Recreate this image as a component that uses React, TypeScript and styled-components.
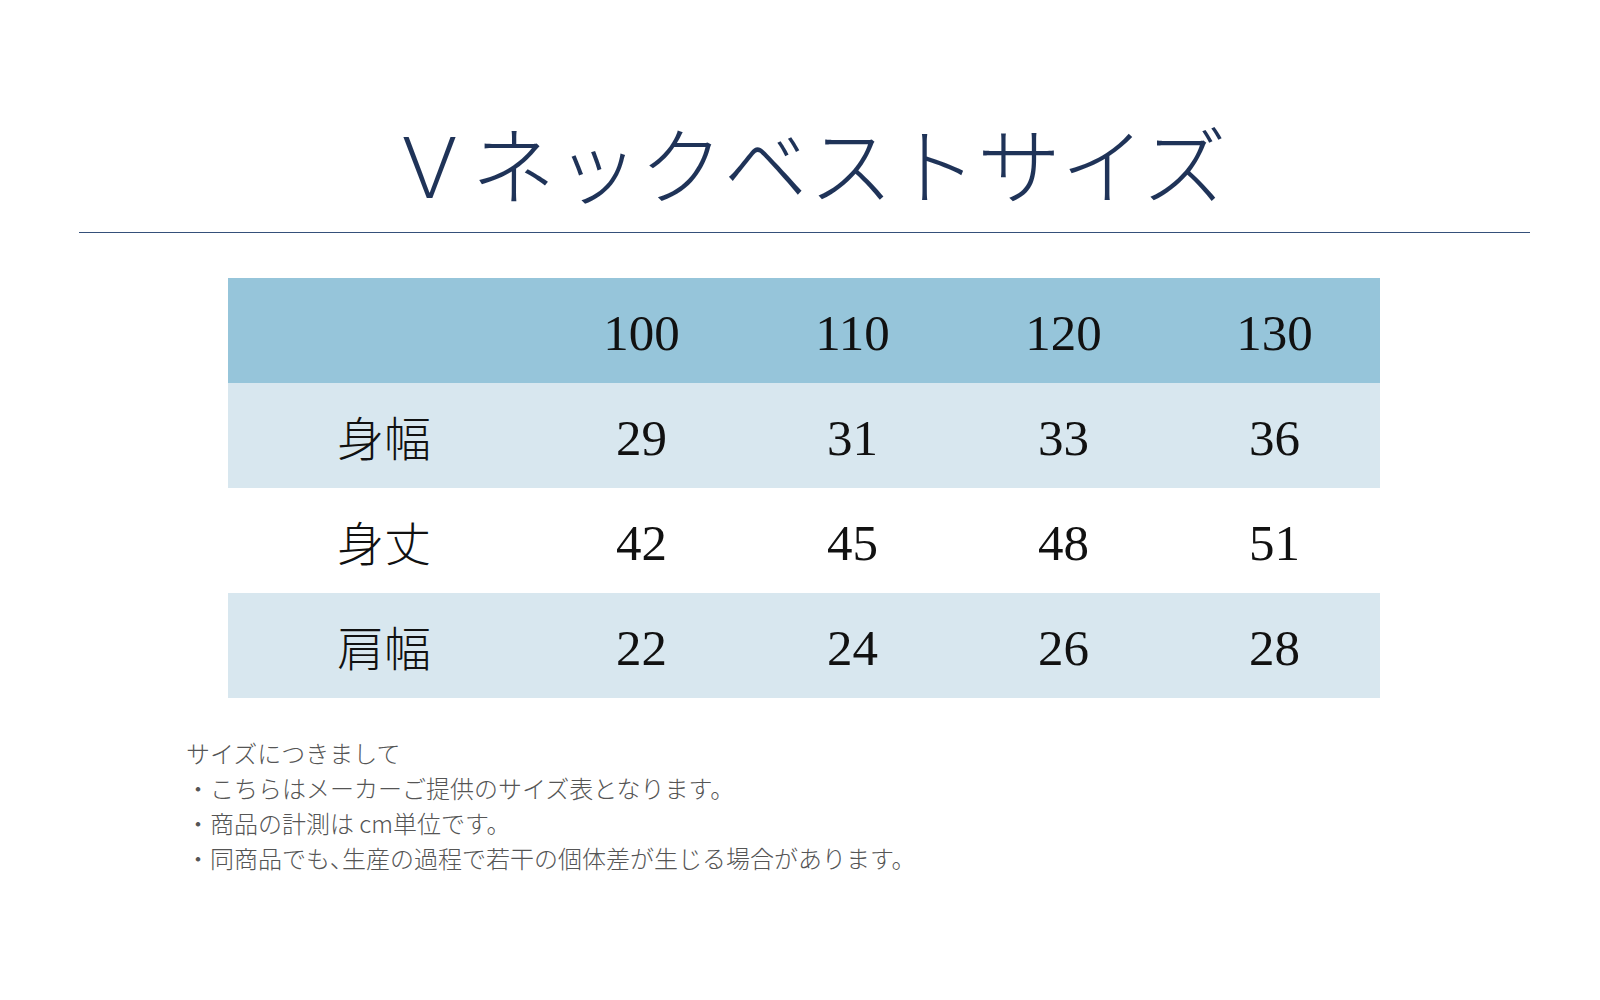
import React from "react";
import styled, { createGlobalStyle } from "styled-components";

const Global = createGlobalStyle`
  html, body { margin: 0; padding: 0; background: #ffffff; }
  body { font-family: "Noto Sans CJK JP", "Noto Sans", sans-serif; }
`;

const Page = styled.div`
  width: 1600px;
  height: 1000px;
  display: flex;
  flex-direction: column;
  background: #ffffff;
  overflow: hidden;
`;

const Title = styled.h1`
  margin: 0;
  padding-top: 128px;
  padding-left: 14px;
  box-sizing: border-box;
  text-align: center;
  font-family: "Liberation Serif", "Noto Sans CJK JP", serif;
  font-weight: 300;
  font-size: 84px;
  line-height: 1;
  color: #1f3358;
`;

const Divider = styled.hr`
  margin: 20px 70px 0 79px;
  border: none;
  height: 1px;
  background: #35507a;
`;

const Table = styled.div`
  margin: 45px 0 0 228px;
  width: 1152px;
  display: grid;
  grid-template-columns: 308px repeat(4, 211px);
`;

const Row = styled.div<{ $bg: string }>`
  display: contents;
  & > * { background: ${(p) => p.$bg}; }
`;

const Cell = styled.div<{ $label?: boolean }>`
  height: 105px;
  box-sizing: border-box;
  display: flex;
  align-items: center;
  justify-content: center;
  color: #111111;
  font-family: ${(p) =>
    p.$label ? '"Noto Sans CJK JP", sans-serif' : '"Liberation Serif", serif'};
  font-weight: ${(p) => (p.$label ? 300 : 400)};
  font-size: ${(p) => (p.$label ? "47px" : "51px")};
  padding-left: ${(p) => (p.$label ? "4px" : "0")};
  padding-top: ${(p) => (p.$label ? "0" : "5px")};
`;

const Notes = styled.div`
  margin: 37px 0 0 186px;
  display: flex;
  flex-direction: column;
  font-family: "Noto Sans CJK JP", sans-serif;
  font-weight: 300;
  font-size: 24px;
  line-height: 35px;
  color: #555555;
`;

const Note = styled.div``;

const Comma = styled.span`
  font-feature-settings: "palt";
`;

const header = ["", "100", "110", "120", "130"];
const rows: { label: string; values: string[]; bg: string }[] = [
  { label: "身幅", values: ["29", "31", "33", "36"], bg: "#d8e7ef" },
  { label: "身丈", values: ["42", "45", "48", "51"], bg: "#ffffff" },
  { label: "肩幅", values: ["22", "24", "26", "28"], bg: "#d8e7ef" },
];

export default function App() {
  return (
    <Page>
      <Global />
      <Title>Ｖネックベストサイズ</Title>
      <Divider />
      <Table>
        <Row $bg="#96c5da">
          {header.map((h, i) => (
            <Cell key={i}>{h}</Cell>
          ))}
        </Row>
        {rows.map((r) => (
          <Row key={r.label} $bg={r.bg}>
            <Cell $label>{r.label}</Cell>
            {r.values.map((v, i) => (
              <Cell key={i}>{v}</Cell>
            ))}
          </Row>
        ))}
      </Table>
      <Notes>
        <Note>サイズにつきまして</Note>
        <Note>・こちらはメーカーご提供のサイズ表となります。</Note>
        <Note>・商品の計測は cm単位です。</Note>
        <Note>
          ・同商品でも<Comma>、</Comma>生産の過程で若干の個体差が生じる場合があります。
        </Note>
      </Notes>
    </Page>
  );
}
